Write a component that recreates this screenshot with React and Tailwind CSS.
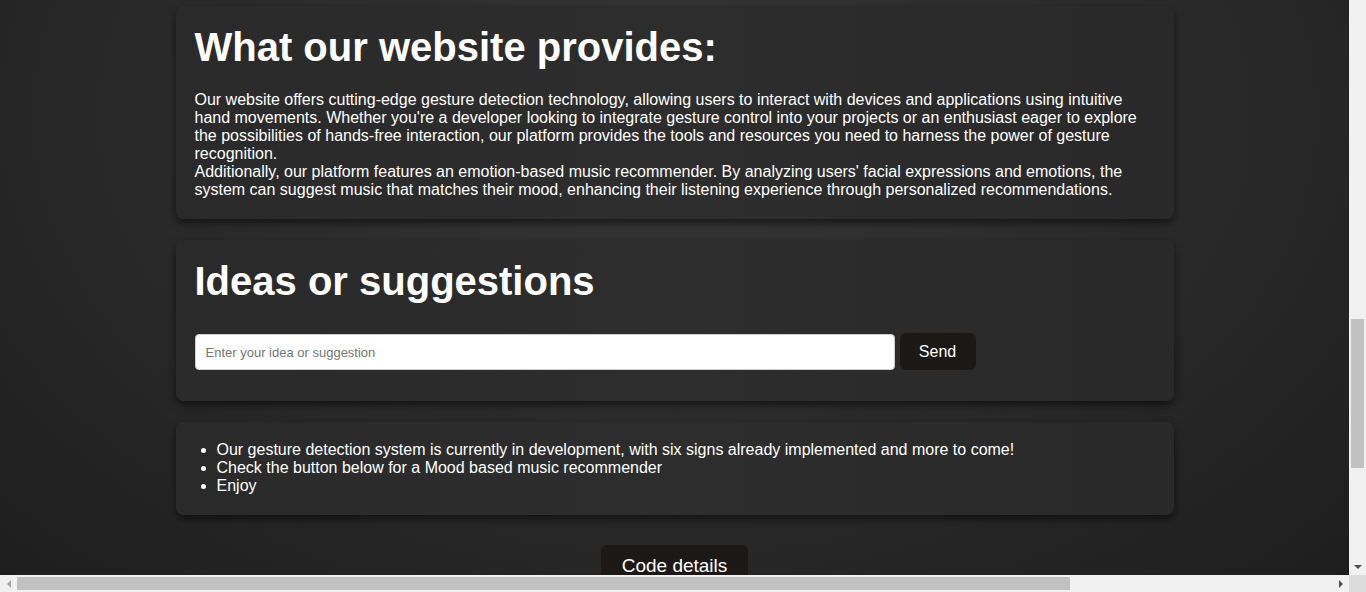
import React from 'react';

const Card = ({ children, className = '' }) => (
    <div className={`w-[998px] rounded-lg bg-[linear-gradient(90deg,#2a2a2a,#2d2d2d_50%,#292929)] shadow-[0_4px_8px_rgba(0,0,0,0.55)] ${className}`}>
        {children}
    </div>
);

const App = () => {
    return (
        <div className="w-[1366px] h-[592px] flex flex-col overflow-hidden font-['Liberation_Sans',Arial,sans-serif] text-white">
            <div className="flex flex-1 min-h-0">
                {/* Page */}
                <div className="flex-1 flex flex-col items-center pt-[6px] bg-[radial-gradient(ellipse_at_50%_20%,#383838_0%,#2c2c2c_45%,#1e1e1e_100%)]">
                    <Card className="px-[19px] pt-[18px] pb-[20px]">
                        <h1 className="text-[40px] font-bold leading-[46px]">What our website provides:</h1>
                        <p className="mt-[21px] text-[16px] leading-[18px] pr-[2px]">
                            Our website offers cutting-edge gesture detection technology, allowing users to interact with devices and applications using intuitive hand movements. Whether you're a developer looking to integrate gesture control into your projects or an enthusiast eager to explore the possibilities of hands-free interaction, our platform provides the tools and resources you need to harness the power of gesture recognition.
                            <br />
                            Additionally, our platform features an emotion-based music recommender. By analyzing users' facial expressions and emotions, the system can suggest music that matches their mood, enhancing their listening experience through personalized recommendations.
                        </p>
                    </Card>

                    <Card className="mt-[21px] px-[19px] pt-[18px] pb-[31px]">
                        <h1 className="text-[40px] font-bold leading-[46px]">Ideas or suggestions</h1>
                        <div className="mt-[29px] flex items-start gap-[5px]">
                            <input
                                type="text"
                                placeholder="Enter your idea or suggestion"
                                className="mt-[1px] w-[700px] h-[36px] rounded-[4px] bg-white border border-[#cfcfcf] px-[10px] text-[13px] text-[#333] placeholder:text-[#757575] outline-none"
                            />
                            <button className="h-[37px] w-[76px] rounded-[6px] bg-[#1c1816] text-[16px] text-white">Send</button>
                        </div>
                    </Card>

                    <Card className="mt-[21px] px-[20px] pt-[19px] pb-[20px]">
                        <ul className="list-disc pl-[21px] text-[16px] leading-[18px]">
                            <li>Our gesture detection system is currently in development, with six signs already implemented and more to come!</li>
                            <li>Check the button below for a Mood based music recommender</li>
                            <li>Enjoy</li>
                        </ul>
                    </Card>

                    <button className="mt-[30px] h-[44px] w-[147px] rounded-[6px] bg-[#1c1816] text-[19px] leading-[22px] text-white flex justify-center items-start pt-[10px] shrink-0">Code details</button>
                </div>

                {/* Vertical scrollbar */}
                <div className="w-[17px] bg-[#f1f1f1] flex flex-col items-center">
                    <div className="h-[319px]" />
                    <div className="w-[13px] h-[149px] bg-[#c1c1c1]" />
                    <div className="flex-1" />
                    <div className="h-[17px] flex items-center justify-center">
                        <div className="w-0 h-0 border-l-[4px] border-r-[4px] border-t-[4px] border-l-transparent border-r-transparent border-t-[#505050]" />
                    </div>
                </div>
            </div>

            {/* Horizontal scrollbar */}
            <div className="h-[17px] flex">
                <div className="flex-1 bg-[#f1f1f1] flex items-center">
                    <div className="w-[17px] h-[17px] flex items-center justify-center">
                        <div className="w-0 h-0 border-t-[4px] border-b-[4px] border-r-[4px] border-t-transparent border-b-transparent border-r-[#a3a3a3]" />
                    </div>
                    <div className="w-[1053px] h-[13px] bg-[#c1c1c1]" />
                    <div className="flex-1" />
                    <div className="w-[17px] h-[17px] flex items-center justify-center">
                        <div className="w-0 h-0 border-t-[4px] border-b-[4px] border-l-[4px] border-t-transparent border-b-transparent border-l-[#505050]" />
                    </div>
                </div>
                <div className="w-[17px] bg-[#dcdcdc]" />
            </div>
        </div>
    );
};

export default App;
